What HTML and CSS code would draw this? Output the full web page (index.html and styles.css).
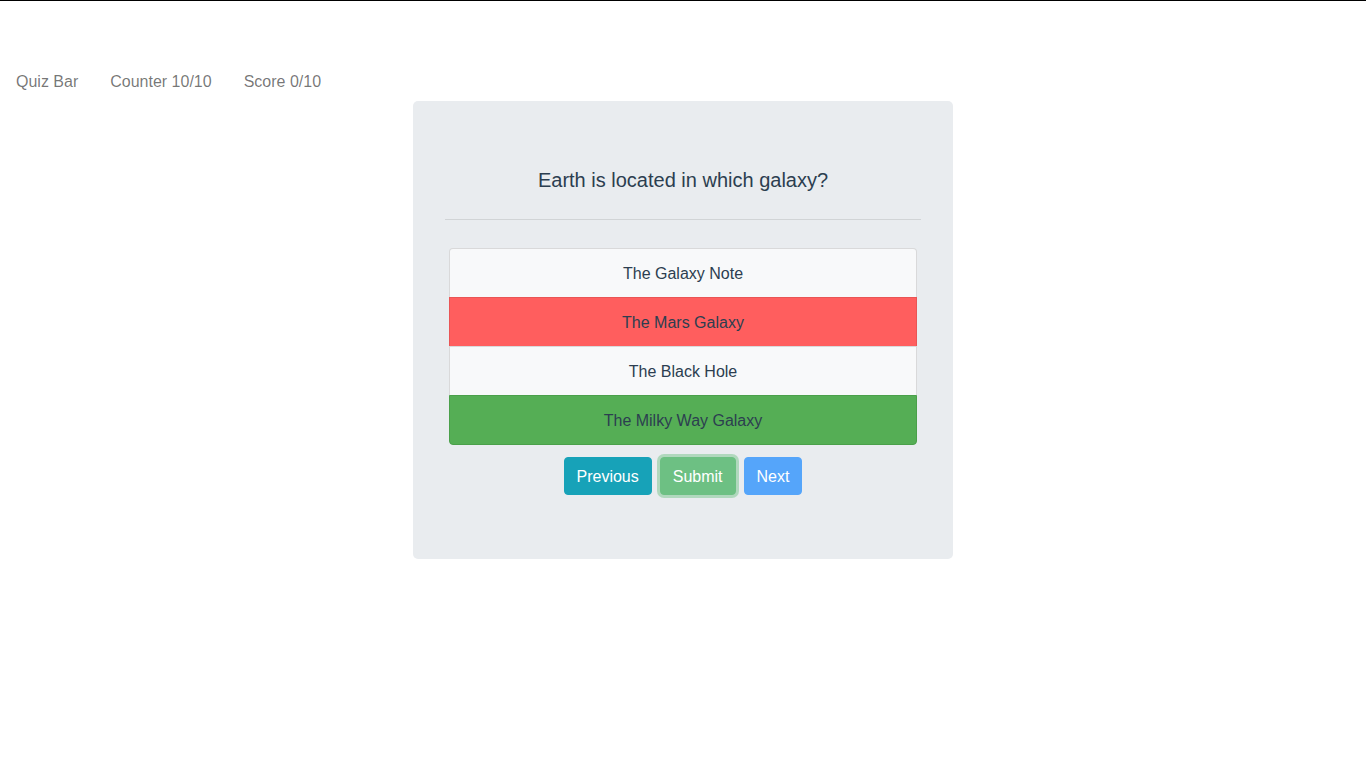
FILE: index.html
```html
<!DOCTYPE html>
<html lang="en">
<head>
<meta charset="utf-8">
<title>Quiz</title>
<link rel="stylesheet" href="styles.css">
</head>
<body>
<div class="topline"></div>
<nav class="navbar">
  <a class="nav-link">Quiz Bar</a>
  <a class="nav-link">Counter 10/10</a>
  <a class="nav-link">Score 0/10</a>
</nav>
<main class="jumbotron">
  <div class="question">Earth is located in which galaxy?</div>
  <hr class="divider">
  <ul class="list-group">
    <li class="list-item">The Galaxy Note</li>
    <li class="list-item wrong">The Mars Galaxy</li>
    <li class="list-item">The Black Hole</li>
    <li class="list-item correct">The Milky Way Galaxy</li>
  </ul>
  <div class="actions">
    <button class="btn btn-info">Previous</button>
    <button class="btn btn-success">Submit</button>
    <button class="btn btn-primary">Next</button>
  </div>
</main>
</body>
</html>
```

FILE: styles.css
```css
* { box-sizing: border-box; }
html, body { margin: 0; padding: 0; }
body {
  font-family: "Liberation Sans", Arial, sans-serif;
  font-size: 16px;
  line-height: 24px;
  color: #2c3e50;
  background: #fff;
}
.topline {
  height: 1px;
  background: #000;
}
.navbar {
  display: flex;
  padding-top: 60px;
}
.nav-link {
  padding: 9px 16px 7px;
  color: rgba(0, 0, 0, 0.55);
  text-decoration: none;
}
.jumbotron {
  width: 540px;
  margin: 0 auto;
  background: #e9ecef;
  border-radius: 5px;
  padding: 64px 32px 64px;
}
.question {
  margin-top: 3px;
  font-size: 20px;
  line-height: 24px;
  text-align: center;
  color: #2c3e50;
}
.divider {
  margin: 27px 0 28px;
  border: 0;
  border-top: 1px solid rgba(0, 0, 0, 0.1);
  height: 0;
}
.list-group {
  list-style: none;
  margin: 0 4px;
  padding: 0;
}
.list-item {
  padding: 13px 20px 11px;
  text-align: center;
  background: #f8f9fa;
  border: 1px solid rgba(0, 0, 0, 0.125);
  margin-bottom: -1px;
  color: #2c3e50;
}
.list-item:first-child { border-radius: 4px 4px 0 0; }
.list-item:last-child { border-radius: 0 0 4px 4px; margin-bottom: 0; }
.list-item.wrong {
  background: #ff5e5e;
  border-color: #e95555;
}
.list-item.correct {
  background: #55ae55;
  border-color: #4aa04a;
}
.actions {
  display: flex;
  justify-content: center;
  gap: 8px;
  margin-top: 12px;
}
.btn {
  font-family: inherit;
  font-size: 16px;
  line-height: 24px;
  padding: 7px 12px 5px;
  border: 1px solid transparent;
  border-radius: 4px;
  color: #fff;
  cursor: pointer;
}
.btn-info { background: #17a2b8; border-color: #17a2b8; }
.btn-success {
  background: #6dc083;
  border-color: #6dc083;
  box-shadow: 0 0 0 3px rgba(72, 180, 97, 0.35);
}
.btn-primary { background: #55a5fa; border-color: #55a5fa; }
```
